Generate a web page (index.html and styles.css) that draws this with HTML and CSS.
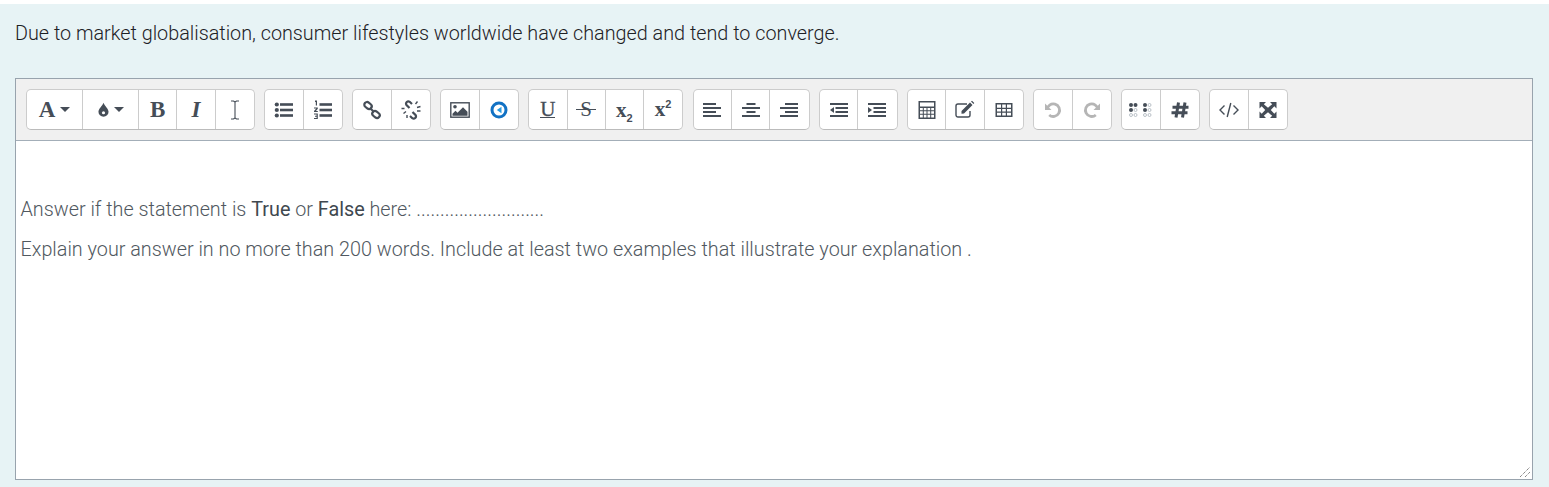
FILE: index.html
```html
<!DOCTYPE html>
<html lang="en">
<head>
<meta charset="utf-8">
<title>Question</title>
<link rel="stylesheet" href="styles.css">
</head>
<body>
<main class="panel">
  <p class="question">Due to market globalisation, consumer lifestyles worldwide have changed and tend to converge.</p>
  <section class="editor">
    <div class="toolbar">
      <div class="group">
        <button class="btn wide"><span class="glyph big">A</span><span class="caret"></span></button>
        <button class="btn wide"><svg class="drop" viewBox="0 0 12 16"><path d="M6 .5c.9 3 5.500 6.500 5.500 10a5.500 5.500 0 0 1-11 0C.5 7 5.100 3.500 6 .5z"/><circle cx="6" cy="11.500" r="1.700" fill="#fff"/></svg><span class="caret"></span></button>
        <button class="btn"><span class="glyph big">B</span></button>
        <button class="btn"><span class="glyph big ital">I</span></button>
        <button class="btn"><svg class="ico" viewBox="0 0 20 20"><path class="ln fine" d="M6 1h2.500L10 2l1.500-1H14M6 19h2.500l1.500-1 1.500 1H14M10 2v16"/></svg></button>
      </div>
      <div class="group">
        <button class="btn"><svg class="ico" viewBox="0 0 20 20"><circle cx="2.800" cy="4.500" r="2.100"/><circle cx="2.800" cy="10" r="2.100"/><circle cx="2.800" cy="15.500" r="2.100"/><rect x="6" y="3.200" width="13" height="2.600"/><rect x="6" y="8.700" width="13" height="2.600"/><rect x="6" y="14.200" width="13" height="2.600"/></svg></button>
        <button class="btn"><svg class="ico" viewBox="0 0 20 20"><rect x="6.500" y="3.200" width="12.500" height="2.600"/><rect x="6.500" y="8.700" width="12.500" height="2.600"/><rect x="6.500" y="14.200" width="12.500" height="2.600"/><path d="M2 .5h2v5H2.800V2H2zM1 7.500h3.800v1.200L3 11h1.800v1H1v-1l2.300-2.500H1zM1 13.500h3.800V19H1v-1h2.600v-1.200H2v-1h1.600v-1.300H1z"/></svg></button>
      </div>
      <div class="group">
        <button class="btn"><svg class="ico" viewBox="0 0 20 20"><g class="ln thick"><rect x="2" y="2.800" width="8" height="5.400" rx="2.700" transform="rotate(40 6 5.500)"/><rect x="10" y="11.800" width="8" height="5.400" rx="2.700" transform="rotate(40 14 14.500)"/><path d="M8 8l4 4"/></g></svg></button>
        <button class="btn"><svg class="ico" viewBox="0 0 20 20"><g class="ln"><path class="thick" d="M8.500 8L5.500 5a2.300 2.300 0 0 1 3.200-3.200L11 4M11.500 12l3 3a2.300 2.300 0 0 1-3.200 3.200L9 16"/><path d="M3.500 8.500H.5M5 11.500l-2.500 2M14.500 4l2-2.500M16 7.500l3.500-1M16 11h3.500M6 15v3"/></g></svg></button>
      </div>
      <div class="group">
        <button class="btn"><svg class="ico" viewBox="0 0 20 20"><rect class="ln" x=".8" y="2.800" width="18.400" height="14.400"/><circle cx="5" cy="6.800" r="1.800"/><path d="M2.500 15.800v-2l3-3 2 2 5.500-5.500 4.500 4.500v4z"/></svg></button>
        <button class="btn"><svg class="ico" viewBox="0 0 20 20"><circle cx="10" cy="10" r="7" fill="none" stroke="#1272c4" stroke-width="3"/><path d="M12.500 6.800v6.400L7.800 10z" fill="#2a9be0"/></svg></button>
      </div>
      <div class="group">
        <button class="btn"><span class="glyph und">U</span></button>
        <button class="btn"><span class="glyph strike">S</span></button>
        <button class="btn"><span class="glyph script low">x<sub class="idx">2</sub></span></button>
        <button class="btn"><span class="glyph script">x<sup class="idx">2</sup></span></button>
      </div>
      <div class="group">
        <button class="btn"><svg class="ico" viewBox="0 0 20 20"><rect x="1" y="3" width="13" height="2"/><rect x="1" y="7" width="18" height="2"/><rect x="1" y="11" width="13" height="2"/><rect x="1" y="15" width="18" height="2"/></svg></button>
        <button class="btn"><svg class="ico" viewBox="0 0 20 20"><rect x="5.500" y="3" width="9" height="2"/><rect x="1" y="7" width="18" height="2"/><rect x="5.500" y="11" width="9" height="2"/><rect x="1" y="15" width="18" height="2"/></svg></button>
        <button class="btn"><svg class="ico" viewBox="0 0 20 20"><rect x="6" y="3" width="13" height="2"/><rect x="1" y="7" width="18" height="2"/><rect x="6" y="11" width="13" height="2"/><rect x="1" y="15" width="18" height="2"/></svg></button>
      </div>
      <div class="group">
        <button class="btn"><svg class="ico" viewBox="0 0 20 20"><rect x="1" y="3" width="18" height="2"/><rect x="6.500" y="7" width="12.500" height="2"/><rect x="6.500" y="11" width="12.500" height="2"/><rect x="1" y="15" width="18" height="2"/><path d="M5 7v6l-4-3z"/></svg></button>
        <button class="btn"><svg class="ico" viewBox="0 0 20 20"><rect x="1" y="3" width="18" height="2"/><rect x="6.500" y="7" width="12.500" height="2"/><rect x="6.500" y="11" width="12.500" height="2"/><rect x="1" y="15" width="18" height="2"/><path d="M1 7v6l4-3z"/></svg></button>
      </div>
      <div class="group">
        <button class="btn"><svg class="ico" viewBox="0 0 20 20"><path fill-rule="evenodd" d="M1.500 1h17v18h-17zM3 2.500v4h14v-4zM3 8v2.200h2.800V8zM6.800 8v2.200h2.700V8zM10.500 8v2.200h2.700V8zM14.200 8v2.200H17V8zM3 11.200v2.600h2.800v-2.600zM6.800 11.200v2.600h2.700v-2.600zM10.500 11.200v2.600h2.700v-2.600zM14.200 11.200v2.600H17v-2.600zM3 14.800v2.700h2.800v-2.700zM6.800 14.800v2.700h2.700v-2.700zM10.500 14.800v2.700h2.700v-2.700zM14.200 14.800v2.700H17v-2.700z"/></svg></button>
        <button class="btn"><svg class="ico" viewBox="0 0 20 20"><path class="ln" d="M15 11v4a2 2 0 0 1-2 2H3a2 2 0 0 1-2-2V6a2 2 0 0 1 2-2h9"/><path d="M6.500 11l8.500-8.500 2.500 2.500L9 13.500l-2.500.3zM16 1.500l1-.8 2.300 2.300-.8 1z"/></svg></button>
        <button class="btn"><svg class="ico" viewBox="0 0 20 20"><path fill-rule="evenodd" d="M1.500 3h17v14h-17zM3 4.500v3.300h4V4.500zM8.200 4.500v3.300h3.600V4.500zM13 4.500v3.300h4V4.500zM3 9v2.500h4V9zM8.200 9v2.500h3.600V9zM13 9v2.500h4V9zM3 12.700v2.800h4v-2.800zM8.200 12.700v2.800h3.600v-2.800zM13 12.700v2.800h4v-2.800z"/></svg></button>
      </div>
      <div class="group">
        <button class="btn"><svg class="ico off" viewBox="0 0 20 20"><path class="ln wide-stroke" d="M4 9.800a6.300 6.300 0 1 1 2.200 5.200"/><path d="M2 3.500l6.500 6.500H2z"/></svg></button>
        <button class="btn"><svg class="ico off" viewBox="0 0 20 20"><path class="ln wide-stroke" d="M16 9.800a6.300 6.300 0 1 0-2.200 5.200"/><path d="M18 3.500L11.500 10H18z"/></svg></button>
      </div>
      <div class="group">
        <button class="btn"><svg class="braille" viewBox="0 0 23 14"><circle cx="2" cy="2" r="2"/><circle cx="6.500" cy="2" r="2"/><circle cx="2" cy="7" r="2"/><circle cx="16" cy="2" r="2"/><circle cx="16" cy="7" r="2"/><g class="pale"><circle cx="6.500" cy="7" r="1.500"/><circle cx="2" cy="12" r="1.500"/><circle cx="6.500" cy="12" r="1.500"/><circle cx="20.500" cy="2" r="1.500"/><circle cx="20.500" cy="7" r="1.500"/><circle cx="16" cy="12" r="1.500"/><circle cx="20.500" cy="12" r="1.500"/></g></svg></button>
        <button class="btn"><svg class="ico" viewBox="0 0 20 20"><path class="ln hash" d="M8.500 2.500L6 17.500M15 2.500L12.500 17.500M2.500 7.300H18.500M1.500 12.700H17.500"/></svg></button>
      </div>
      <div class="group">
        <button class="btn"><svg class="ico" viewBox="0 0 20 20"><path class="ln" d="M5.500 5.500L1 10l4.500 4.500M14.500 5.500L19 10l-4.500 4.500M11.800 3L8.200 17"/></svg></button>
        <button class="btn"><svg class="ico" viewBox="0 0 20 20"><path d="M1.500 2h6.500L5.800 4.200l4.200 3.500 4.200-3.500L12 2h6.500v6.500l-2.200-2.200L12.800 10l3.500 3.700 2.200-2.200V18H12l2.200-2.200-4.200-3.500-4.200 3.500L8 18H1.500v-6.500l2.200 2.200L7.200 10 3.700 6.300 1.500 8.500z"/></svg></button>
      </div>
    </div>
    <div class="content">
      <p class="line">Answer if the statement is <strong>True</strong> or <strong>False</strong> here: ...........................</p>
      <p class="line">Explain your answer in no more than 200 words. Include at least two examples that illustrate your explanation .</p>
      <svg class="grip" viewBox="0 0 10 10"><path d="M0 10L10 0M5 10l5-5"/></svg>
    </div>
  </section>
</main>
</body>
</html>
```
FILE: styles.css
```css
* { box-sizing: border-box; }
html, body { margin: 0; height: 487px; overflow: hidden; background: #fff; }
body { padding-top: 4px; font-family: Roboto, "Liberation Sans", sans-serif; }
.panel { height: 483px; background: #e7f3f5; padding: 0 16px 0 15px; }
.question { margin: 0; padding-top: 18px; height: 74px; font-size: 19.8px; line-height: 24px; font-weight: 300; color: #1d2125; }
.editor { display: flex; flex-direction: column; height: 402px; border: 1px solid #98a3ad; }
.toolbar { display: flex; gap: 9.5px; height: 62px; padding: 10px 10px 0; background: #f0f0f0; border-bottom: 1px solid #a3aeb8; }
.group { display: flex; height: 41px; background: #fff; border: 1px solid #ccc; border-bottom-color: #bbb; border-radius: 5px; }
.btn { display: flex; align-items: center; justify-content: center; gap: 5px; width: 38.25px; height: 39px; margin: 0; padding: 0; background: none; border: 0; border-right: 1px solid #ccc; color: #454d57; }
.btn:last-child { border-right: 0; }
.wide { width: 56px; }
.ico { width: 20px; height: 20px; fill: #454d57; }
.drop { width: 11px; height: 15px; fill: #454d57; }
.braille { width: 23px; height: 14px; fill: #454d57; }
.off { fill: #b5b5b5; }
.ln { fill: none; stroke: #454d57; stroke-width: 1.4; }
.off .ln { stroke: #b5b5b5; }
.fine { stroke-width: 1.1; }
.thick { stroke-width: 2.2; }
.wide-stroke { stroke-width: 2.800; }
.hash { stroke-width: 3; }
.pale { fill: none; stroke: #aab2ba; stroke-width: .8; }
.glyph { position: relative; font-family: "Liberation Serif", serif; font-weight: 700; color: #454d57; line-height: 1; }
.big { font-size: 23px; }
.ital { font-style: italic; }
.und { font-size: 21px; font-weight: 400; -webkit-text-stroke: .3px #454d57; line-height: 16px; border-bottom: 1px solid #454d57; }
.strike { font-size: 21px; font-weight: 400; }
.strike::after { content: ""; position: absolute; left: -4px; right: -4px; top: 10px; height: 1px; background: #454d57; }
.script { font-size: 21px; }
.low { top: 1px; }
.idx { font-family: "Liberation Sans", sans-serif; font-size: 11px; line-height: 0; }
.caret { width: 0; height: 0; border-left: 5.500px solid transparent; border-right: 5.500px solid transparent; border-top: 5.500px solid #454d57; }
.content { position: relative; flex: 1; background: #fff; padding: 54px 4.500px 0; font-weight: 300; color: #505860; }
.line { margin: 0 0 10px; font-size: 19.8px; line-height: 30px; }
.line strong { font-weight: 400; color: #40484f; }
.grip { position: absolute; right: 2px; bottom: 2px; width: 10px; height: 10px; fill: none; stroke: #555; stroke-width: 1; stroke-dasharray: 1 1; }
```
